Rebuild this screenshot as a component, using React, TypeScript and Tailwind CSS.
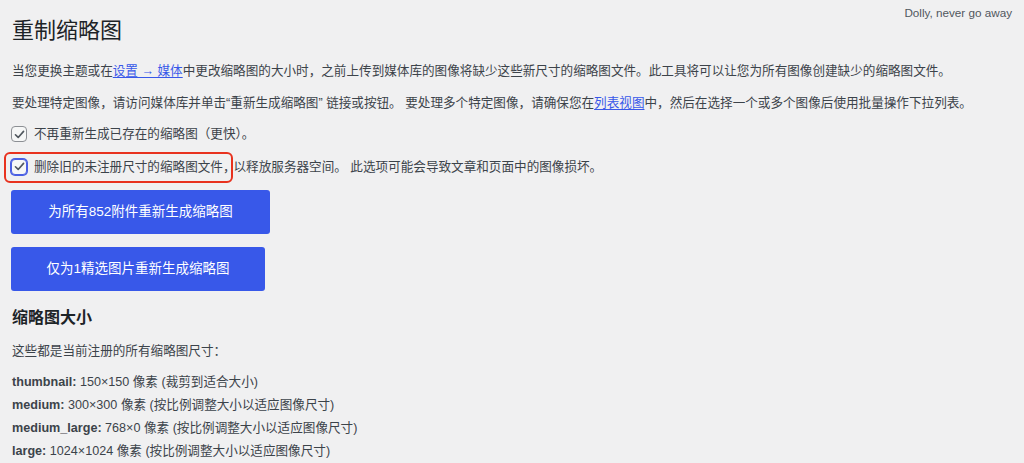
const FONT = "font-['Liberation_Sans','Noto_Sans_CJK_SC',sans-serif]";

const SIZES = [
  { name: "thumbnail", dims: "150×150", note: "(裁剪到适合大小)" },
  { name: "medium", dims: "300×300", note: "(按比例调整大小以适应图像尺寸)" },
  { name: "medium_large", dims: "768×0", note: "(按比例调整大小以适应图像尺寸)" },
  { name: "large", dims: "1024×1024", note: "(按比例调整大小以适应图像尺寸)" },
];

function CheckBox({ focused = false }: { focused?: boolean }) {
  return (
    <span
      className={`flex h-4 w-4 shrink-0 items-center justify-center rounded-[4px] border bg-[#f6f7f7] ${
        focused ? "border-[#4a5fe3] shadow-[0_0_0_1px_#4a5fe3]" : "border-[#8c8f94]"
      }`}
    >
      <svg viewBox="0 0 16 16" className="h-[13px] w-[13px]" fill="none">
        <path d="M3 8.3 6.4 11.6 13 4.2" stroke="#50575e" strokeWidth="2" strokeLinecap="round" strokeLinejoin="round" />
      </svg>
    </span>
  );
}

export default function App() {
  return (
    <div className={`h-[463px] w-full overflow-hidden bg-[#f0f0f1] text-[#3c434a] ${FONT}`}>
      <p className="float-right px-3 pt-[5px] text-[11.7px] leading-4 text-[#50575e]">Dolly, never go away</p>
      <div className="px-3">
        <h1 className="pt-[17px] text-[22px] leading-[28px] font-normal text-[#1d2327]">重制缩略图</h1>

        <p className="mt-4 text-[12.6px] leading-5">
          当您更换主题或在
          <a className="text-[#3858e9] underline underline-offset-2">设置 → 媒体</a>
          中更改缩略图的大小时，之前上传到媒体库的图像将缺少这些新尺寸的缩略图文件。此工具将可以让您为所有图像创建缺少的缩略图文件。
        </p>

        <p className="mt-3 text-[12.6px] leading-5">
          要处理特定图像，请访问媒体库并单击“重新生成缩略图” 链接或按钮。 要处理多个特定图像，请确保您在
          <a className="text-[#3858e9] underline underline-offset-2">列表视图</a>
          中，然后在选择一个或多个图像后使用批量操作下拉列表。
        </p>

        <label className="-ml-px mt-[11px] flex h-5 items-center gap-[7px] text-[12.6px]">
          <CheckBox />
          <span>不再重新生成已存在的缩略图（更快）。</span>
        </label>

        <label className="-ml-px mt-[13px] flex h-5 items-center text-[12.6px]">
          <span className="relative flex items-center gap-[7px]">
            <CheckBox focused />
            <span>删除旧的未注册尺寸的缩略图文件，</span>
            <span className="pointer-events-none absolute -top-[6px] -bottom-[7px] -left-[7px] right-[3px] rounded-[6px] border-2 border-[#e8321f]" />
          </span>
          <span className="-ml-[2px]">以释放服务器空间。 此选项可能会导致文章和页面中的图像损坏。</span>
        </label>

        <div className="-ml-px mt-[13px] flex flex-col items-start gap-[13px]">
          <button className="h-11 w-[259px] rounded-[3px] bg-[#3858e9] text-[13.5px] text-white">
            为所有852附件重新生成缩略图
          </button>
          <button className="h-11 w-[254px] rounded-[3px] bg-[#3858e9] text-[13.5px] text-white">
            仅为1精选图片重新生成缩略图
          </button>
        </div>

        <h2 className="mt-[15px] text-[16px] leading-6 font-bold text-[#1d2327]">缩略图大小</h2>

        <p className="mt-[11px] text-[12.6px] leading-5">这些都是当前注册的所有缩略图尺寸：</p>

        <ul className="mt-[10px] text-[12.6px] leading-[23px]">
          {SIZES.map((s) => (
            <li key={s.name}>
              <span className="font-bold">{s.name}:</span> {s.dims} 像素 {s.note}
            </li>
          ))}
        </ul>
      </div>
    </div>
  );
}
